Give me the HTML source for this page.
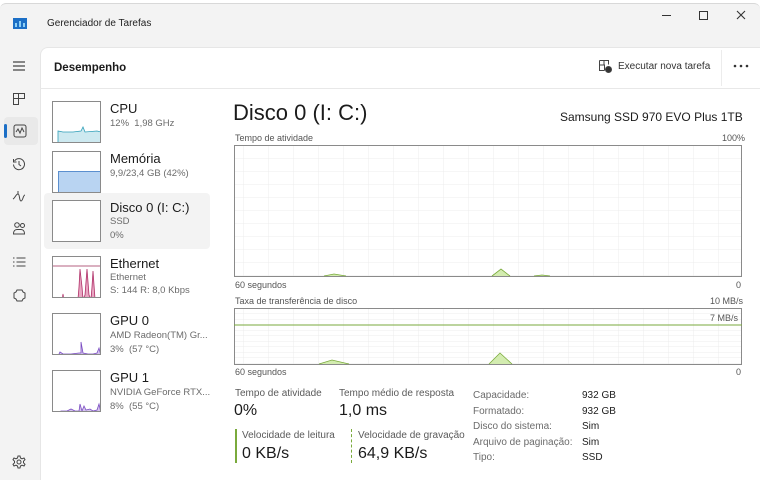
<!DOCTYPE html>
<html><head><meta charset="utf-8"><style>
*{margin:0;padding:0;box-sizing:border-box}
body{width:760px;height:480px;overflow:hidden;background:#fff;font-family:"Liberation Sans",sans-serif;color:#1b1b1b;position:relative}
.a{position:absolute;white-space:nowrap}
.win{position:absolute;left:0;top:3px;width:760px;height:477px;background:#f3f3f3;border-top:1px solid #d8d8d8;border-radius:6px 6px 0 0}
.main{position:absolute;left:40px;top:47px;width:720px;height:433px;background:#fff;border-radius:8px 0 0 0;border-left:1px solid #e6e6e6;border-top:1px solid #e6e6e6}
.th{position:absolute;left:52px;width:49px;height:42px;border:1px solid #8a8a8a;background:#fff;overflow:hidden}
.t1{font-size:13px;color:#1b1b1b}
.t2{font-size:9.5px;color:#6b6b6b}
.s{font-size:9px;color:#555}
.lab{font-size:10px;color:#5a5a5a}
.big{font-size:16px;color:#1b1b1b}
</style></head><body>
<div class="a" style="left:232px;top:-9px;font-size:11px;color:#333">Maneiras de entrar</div>
<div class="win"></div>
<svg class="a" style="left:13px;top:18px" width="14" height="11"><rect width="14" height="11" fill="#1c6fc6"/><rect x="2" y="5" width="2" height="4" fill="#8ed0f5"/><rect x="6" y="3" width="2" height="6" fill="#8ed0f5"/><rect x="10" y="5" width="2" height="4" fill="#8ed0f5"/></svg>
<div class="a" style="left:47px;top:18px;font-size:10px;color:#222">Gerenciador de Tarefas</div>
<div class="a" style="left:662px;top:15px;width:9px;height:1px;background:#333"></div>
<div class="a" style="left:699px;top:11px;width:9px;height:9px;border:1px solid #333"></div>
<svg class="a" style="left:736px;top:10px" width="10" height="10"><path d="M1 1l8 8M9 1l-8 8" stroke="#333" stroke-width="1.1"/></svg>
<!-- sidebar icons -->
<svg class="a" style="left:12px;top:60px" width="14" height="12"><path d="M1 2h12M1 6h12M1 10h12" stroke="#444" stroke-width="1.2"/></svg>
<svg class="a" style="left:12px;top:92px" width="14" height="14" fill="none" stroke="#444"><path d="M1.5 1.5h5v5h-5zM1.5 6.5h5v6h-5zM6.5 1.5h6v5h-6z"/></svg>
<div class="a" style="left:4px;top:117px;width:34px;height:28px;background:#e9e9e9;border-radius:4px"></div>
<div class="a" style="left:4px;top:124px;width:3px;height:14px;background:#1c6fc6;border-radius:2px"></div>
<svg class="a" style="left:13px;top:124px" width="14" height="14" fill="none" stroke="#444"><rect x="1" y="1" width="12" height="12" rx="2"/><path d="M3 8l2-3 2 4 2-5 2 4"/></svg>
<svg class="a" style="left:12px;top:157px" width="14" height="14" fill="none" stroke="#444"><path d="M2.5 4A5.5 5.5 0 1 1 1.5 7.5M1.5 2v3h3M7 4v3.5l2 1.5"/></svg>
<svg class="a" style="left:12px;top:190px" width="14" height="12" fill="none" stroke="#444"><path d="M1 9c2-1 3-5 5-5s1 7 3 7 2-6 4-6M6 1v3"/></svg>
<svg class="a" style="left:12px;top:221px" width="15" height="15" fill="none" stroke="#444"><circle cx="5" cy="4" r="2.3"/><circle cx="10.5" cy="4.5" r="2"/><path d="M1.5 13c0-3 1.5-4.5 3.5-4.5h4c2 0 3.5 1.5 3.5 4.5z"/></svg>
<svg class="a" style="left:12px;top:256px" width="14" height="12" fill="none" stroke="#444"><path d="M1 2h1.5M1 6h1.5M1 10h1.5M4.5 2h9M4.5 6h9M4.5 10h9"/></svg>
<svg class="a" style="left:12px;top:288px" width="15" height="15" fill="none" stroke="#444"><path d="M5 2h5l1 2 2 1v5l-2 1-1 2H5l-1-2-2-1V5l2-1z"/></svg>
<svg class="a" style="left:12px;top:455px" width="14" height="14" fill="none" stroke="#444"><circle cx="7" cy="7" r="2"/><path d="M6 1h2l.5 2 1.5.8 2-.8 1 1.7-1.5 1.5v1.6l1.5 1.5-1 1.7-2-.8-1.5.8L8 13H6l-.5-2L4 10.2l-2 .8-1-1.7 1.5-1.5V6.2L1 4.7l1-1.7 2 .8L5.5 3z"/></svg>
<div class="main"></div>
<div class="a" style="left:54px;top:62px;font-size:11.5px;font-weight:bold;color:#1b1b1b">Desempenho</div>
<div class="a" style="left:40px;top:88px;width:720px;height:1px;background:#e8e8e8"></div>
<svg class="a" style="left:598px;top:59px" width="14" height="14" fill="none" stroke="#444"><path d="M1.5 1.5h9v4M1.5 1.5v10h5M1.5 6h5v5.5M6 1.5v4"/><circle cx="10.5" cy="10.5" r="3" fill="#333"/></svg>
<div class="a" style="left:618px;top:61px;font-size:10px;color:#333">Executar nova tarefa</div>
<div class="a" style="left:721px;top:50px;width:1px;height:36px;background:#ececec"></div>
<svg class="a" style="left:733px;top:64px" width="16" height="4"><circle cx="2" cy="2" r="1.3" fill="#333"/><circle cx="8" cy="2" r="1.3" fill="#333"/><circle cx="14" cy="2" r="1.3" fill="#333"/></svg>
<!-- left list -->
<div class="a" style="left:44px;top:193px;width:166px;height:56px;background:#f3f3f3;border-radius:4px"></div>
<div class="th" style="top:101px"><svg width="49" height="42"><path d="M5 34 5 29 10 30 20 30 28 29 30 25 32 30 44 29 48 30 48 42 5 42z" fill="#cde9f0" stroke="#2f9fb8" stroke-width=".8"/></svg></div>
<div class="a t1" style="left:110px;top:101px">CPU</div>
<div class="a t2" style="left:110px;top:118px">12%&nbsp; 1,98 GHz</div>
<div class="th" style="top:151px"><div style="position:absolute;left:5px;top:19px;width:43px;height:22px;background:#b9d4f2;border:1px solid #5b8fcf"></div></div>
<div class="a t1" style="left:110px;top:151px">Memória</div>
<div class="a t2" style="left:110px;top:168px">9,9/23,4 GB (42%)</div>
<div class="th" style="top:200px"></div>
<div class="a t1" style="left:110px;top:200px">Disco 0 (I: C:)</div>
<div class="a t2" style="left:110px;top:216px">SSD</div>
<div class="a t2" style="left:110px;top:230px">0%</div>
<div class="th" style="top:256px"><svg width="49" height="42"><path d="M0 9H49" stroke="#9b2b58" stroke-width=".8"/><path d="M25 42 26 30 27 12 29 30 30 42 32 38 34 12 36 38 38 42 39 30 40 14 42 42" fill="#e8a6c2" stroke="#b03068" stroke-width=".8"/><path d="M9 42 10 37 11 42" fill="none" stroke="#b03068" stroke-width=".7"/></svg></div>
<div class="a t1" style="left:110px;top:256px">Ethernet</div>
<div class="a t2" style="left:110px;top:272px">Ethernet</div>
<div class="a t2" style="left:110px;top:285px">S: 144 R: 8,0 Kbps</div>
<div class="th" style="top:313px"><svg width="49" height="42"><path d="M5 42 7 38 10 40 18 40 26 39 28 39 28 28 30 39 35 40 40 40 44 39 46 34 48 42z" fill="#d6c6ee" stroke="#7a4cc2" stroke-width=".8"/></svg></div>
<div class="a t1" style="left:110px;top:313px">GPU 0</div>
<div class="a t2" style="left:110px;top:330px">AMD Radeon(TM) Gr...</div>
<div class="a t2" style="left:110px;top:344px">3%&nbsp; (57 °C)</div>
<div class="th" style="top:370px"><svg width="49" height="42"><path d="M5 42 8 40 14 40 18 38 22 40 26 40 27 33 29 40 31 35 33 39 37 38 40 40 44 39 46 33 48 42z" fill="#d6c6ee" stroke="#7a4cc2" stroke-width=".8"/></svg></div>
<div class="a t1" style="left:110px;top:370px">GPU 1</div>
<div class="a t2" style="left:110px;top:387px">NVIDIA GeForce RTX...</div>
<div class="a t2" style="left:110px;top:401px">8%&nbsp; (55 °C)</div>
<!-- right -->
<div class="a" style="left:233px;top:100px;font-size:22px;color:#1b1b1b">Disco 0 (I: C:)</div>
<div class="a" style="left:560px;top:110px;font-size:12px;color:#1b1b1b">Samsung SSD 970 EVO Plus 1TB</div>
<div class="a s" style="left:235px;top:133px">Tempo de atividade</div>
<div class="a s" style="left:722px;top:133px">100%</div>
<svg class="a" style="left:234px;top:145px" width="508" height="132">
<defs><pattern id="g" width="25" height="13" patternUnits="userSpaceOnUse" x="9"><path d="M0 0V13M0 0H25" stroke="#ececec" stroke-width="1"/></pattern></defs>
<rect x="0.5" y="0.5" width="507" height="131" fill="url(#g)" stroke="#8a8a8a"/>
<path d="M90 131 100 129 112 131M258 131 267 124 276 131M300 131 308 130 316 131" fill="#d3ecb0" stroke="#7aaa3c" stroke-width=".8"/>
</svg>
<div class="a s" style="left:235px;top:280px">60 segundos</div>
<div class="a s" style="left:736px;top:280px">0</div>
<div class="a s" style="left:235px;top:296px">Taxa de transferência de disco</div>
<div class="a s" style="left:710px;top:296px">10 MB/s</div>
<svg class="a" style="left:234px;top:308px" width="508" height="57">
<defs><pattern id="g2" width="25" height="5.5" patternUnits="userSpaceOnUse" x="9"><path d="M0 0V6M0 0H25" stroke="#ececec" stroke-width="1"/></pattern></defs>
<rect x="0.5" y="0.5" width="507" height="56" fill="url(#g2)" stroke="#8a8a8a"/>
<path d="M0 17H508" stroke="#7aaa3c" stroke-width="1"/>
<path d="M85 56 98 52 115 56M255 56 266 45 278 56" fill="#d3ecb0" stroke="#7aaa3c" stroke-width=".8"/>
</svg>
<div class="a s" style="left:710px;top:313px">7 MB/s</div>
<div class="a s" style="left:235px;top:367px">60 segundos</div>
<div class="a s" style="left:736px;top:367px">0</div>
<div class="a lab" style="left:235px;top:388px">Tempo de atividade</div>
<div class="a big" style="left:234px;top:402px">0%</div>
<div class="a lab" style="left:339px;top:388px">Tempo médio de resposta</div>
<div class="a big" style="left:339px;top:402px">1,0 ms</div>
<div class="a" style="left:235px;top:429px;width:2px;height:34px;background:#7aaa3c"></div>
<div class="a lab" style="left:242px;top:430px">Velocidade de leitura</div>
<div class="a big" style="left:242px;top:445px">0 KB/s</div>
<div class="a" style="left:351px;top:429px;width:0;height:34px;border-left:1px dashed #7aaa3c"></div>
<div class="a lab" style="left:358px;top:430px">Velocidade de gravação</div>
<div class="a big" style="left:358px;top:445px">64,9 KB/s</div>
<div class="a lab" style="left:473px;top:388px;line-height:15.5px;color:#6b6b6b">Capacidade:<br>Formatado:<br>Disco do sistema:<br>Arquivo de paginação:<br>Tipo:</div>
<div class="a lab" style="left:582px;top:388px;line-height:15.5px;color:#1b1b1b">932 GB<br>932 GB<br>Sim<br>Sim<br>SSD</div>
</body></html>
